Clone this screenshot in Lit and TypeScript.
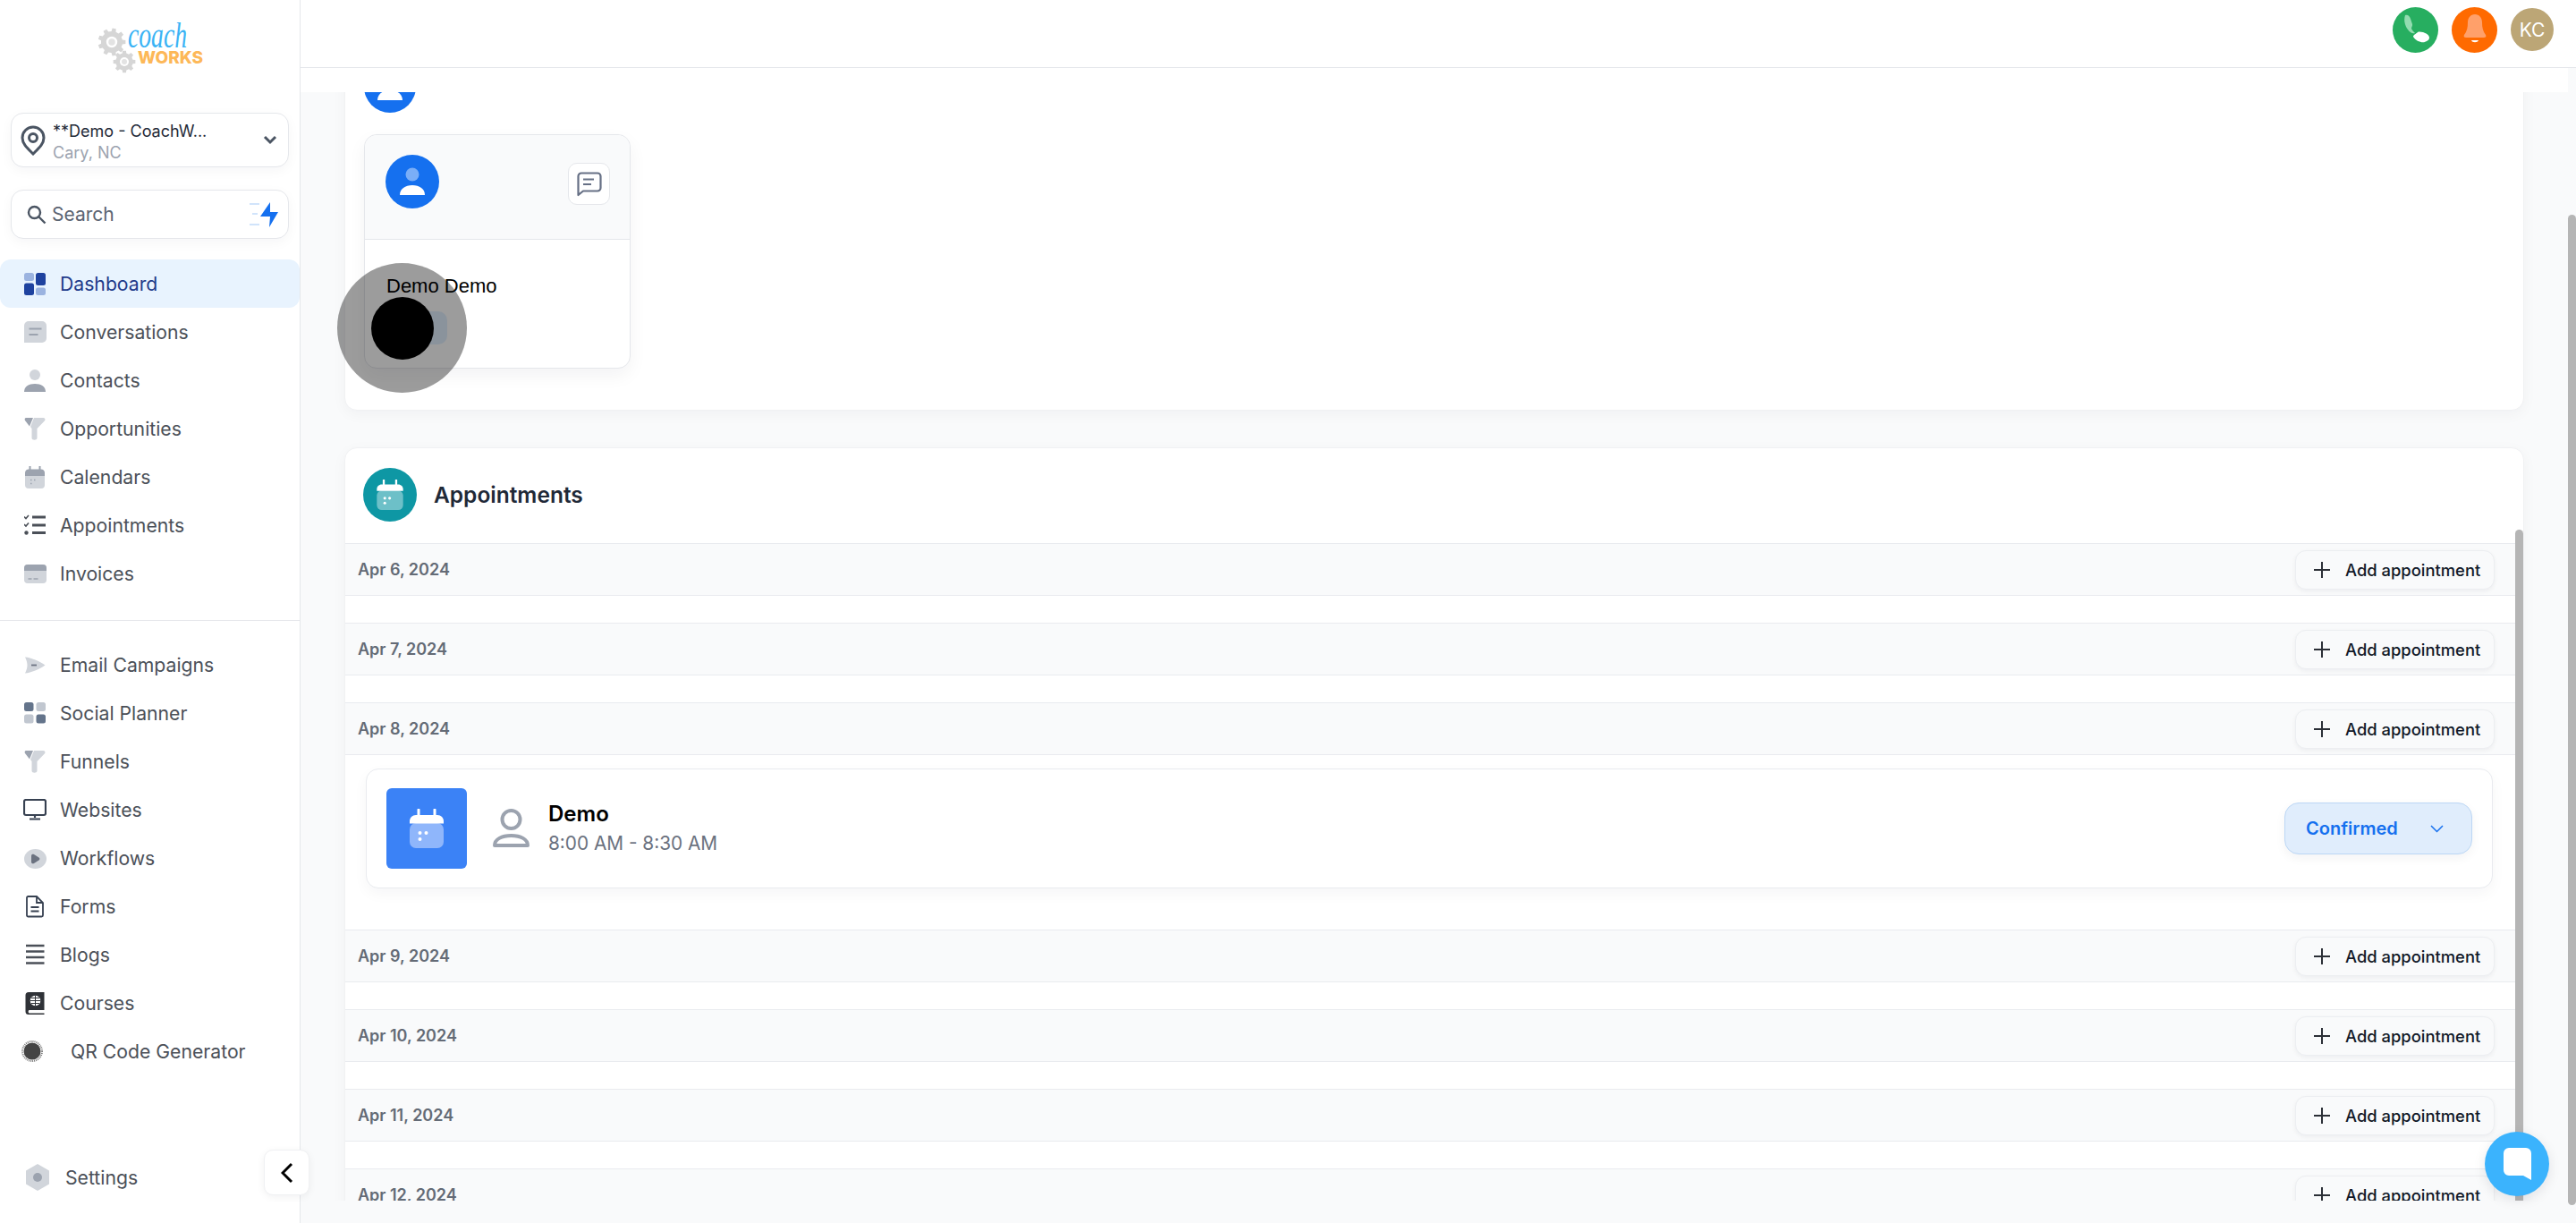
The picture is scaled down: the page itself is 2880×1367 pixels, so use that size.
import { LitElement, html, css, svg } from 'lit';
import { customElement } from 'lit/decorators.js';

interface NavItem {
  label: string;
  icon: unknown;
  active?: boolean;
}

const LIGHT = '#d1d5db';
const MID = '#9ca3af';
const DARK = '#374151';

const funnel = svg`
  <path d="M11 0h10.500c1.800 0 2.500 1.800 1.500 3.300L14.500 12v10.500c0 3-6 3-6 0V12L7 10z" fill="${LIGHT}"/>
  <path d="M2 0h8L6 9.500 1 3C.2 1.700.8 0 2 0z" fill="${MID}"/>`;

const icons: Record<string, unknown> = {
  dashboard: svg`
    <rect x="0" y="0" width="11" height="9" rx="2.500" fill="#9bb3e0"/>
    <rect x="13" y="0" width="11" height="14" rx="2.500" fill="#1e429f"/>
    <rect x="0" y="11.500" width="11" height="13.500" rx="2.500" fill="#1e429f"/>
    <rect x="13" y="16.500" width="11" height="8.500" rx="2.500" fill="#9bb3e0"/>`,
  conversations: svg`
    <path d="M5 0h15a5 5 0 0 1 5 5v14a5 5 0 0 1-5 5H0V5a5 5 0 0 1 5-5z" fill="${LIGHT}"/>
    <path d="M5.500 8.500h14M5.500 15h10" stroke="${MID}" stroke-width="2" fill="none"/>`,
  contacts: svg`
    <circle cx="12" cy="6" r="6" fill="${LIGHT}"/>
    <path d="M0 25c0-6 5-9 12-9s12 3 12 9z" fill="${MID}"/>`,
  funnel,
  calendars: svg`
    <rect x="1" y="5" width="22" height="20" rx="4" fill="${LIGHT}"/>
    <path d="M1 11V7.500C1 5 3 3.500 5 3.500h14c2 0 4 1.500 4 4V11z" fill="${MID}"/>
    <path d="M6.500 0v4M17.500 0v4" stroke="${MID}" stroke-width="2"/>
    <path d="M7 15.500h1.500M11 15.500h1.500M7 19.500h1.500" stroke="${MID}" stroke-width="1.600"/>`,
  appointments: svg`
    <path d="M0 2.500l2 2 3-3.500M0 11l2 2 3-3.500" stroke="#4b5058" stroke-width="1.600" fill="none"/>
    <circle cx="2.500" cy="20.500" r="2.200" fill="#4b5058"/>
    <path d="M9 3h15M9 12h15M9 20.500h15" stroke="#4b5058" stroke-width="3" fill="none"/>`,
  invoices: svg`
    <rect x="0" y="0" width="25" height="21" rx="4" fill="${LIGHT}"/>
    <path d="M0 7V4a4 4 0 0 1 4-4h17a4 4 0 0 1 4 4v3z" fill="${MID}"/>
    <path d="M4.500 16h4M10.500 16h5" stroke="${MID}" stroke-width="1.500"/>`,
  email: svg`
    <path d="M1 1.500C8 2 17 6 23.500 10.500 17 15 8 19 1 19.500c1.500-3 2.500-6 2.500-9S2.500 4.500 1 1.500z" fill="${LIGHT}"/>
    <path d="M8 10.500h6" stroke="#6b7280" stroke-width="1.800"/>`,
  social: svg`
    <rect x="0" y="0" width="10.500" height="10" rx="2.500" fill="#64748b"/>
    <rect x="13.500" y="0" width="10.500" height="10" rx="2.500" fill="#c1c7d0"/>
    <rect x="0" y="13.500" width="10.500" height="10" rx="2.500" fill="#c1c7d0"/>
    <rect x="13.500" y="13.500" width="10.500" height="10" rx="2.500" fill="#64748b"/>`,
  websites: svg`
    <rect x="1" y="1" width="24" height="17" rx="2" stroke="${DARK}" stroke-width="2.200" fill="none"/>
    <path d="M13 18v3M7 22.500h12" stroke="${DARK}" stroke-width="2.200" fill="none"/>`,
  workflows: svg`
    <ellipse cx="12.500" cy="12" rx="12.500" ry="11" fill="${LIGHT}"/>
    <path d="M8 8.500c0-1.500 1.500-2 3-1.500l5.500 3.500c1.200.8 1.200 2.200 0 3L11 17c-1.500.7-3 0-3-1.500z" fill="#6b7280"/>`,
  forms: svg`
    <path d="M4.500 1H14l7 7v14a1.500 1.500 0 0 1-1.500 1.500h-15A1.500 1.500 0 0 1 3 22V2.500A1.500 1.500 0 0 1 4.500 1z" stroke="${DARK}" stroke-width="1.800" fill="none"/>
    <path d="M14 1v7h7M7.500 13h9M7.500 17.500h9" stroke="${DARK}" stroke-width="1.800" fill="none"/>`,
  blogs: svg`
    <path d="M2 2h20.500M2 8.500h20.500M2 15h20.500M2 21.500h20.500" stroke="#4b5058" stroke-width="2.400"/>`,
  courses: svg`
    <path d="M5 0h17.500v20H5.500a2.200 2.200 0 0 0 0 3.500h17V25H5a3.500 3.500 0 0 1-3.500-3.500V3.500A3.500 3.500 0 0 1 5 0z" fill="#2f3237"/>
    <circle cx="12.500" cy="9.500" r="5.800" fill="#fff"/>
    <path d="M6.700 9.500h11.600M12.500 3.700v11.600M8 6.500h9M8 12.500h9" stroke="#2f3237" stroke-width="1"/>`,
  settings: svg`
    <path d="M14 0l13 7.500v15L14 30 1 22.500v-15z" fill="${LIGHT}"/>
    <circle cx="14" cy="15" r="5" fill="${MID}"/>`,
};

const navIcon = (name: string, w = 24, h = 25) => html`
  <svg class="nav-icon" width="${w}" height="${h}" viewBox="0 0 ${w} ${h}">${icons[name]}</svg>
`;

const topNav: NavItem[] = [
  { label: 'Dashboard', icon: navIcon('dashboard'), active: true },
  { label: 'Conversations', icon: navIcon('conversations', 25, 24) },
  { label: 'Contacts', icon: navIcon('contacts') },
  { label: 'Opportunities', icon: navIcon('funnel') },
  { label: 'Calendars', icon: navIcon('calendars') },
  { label: 'Appointments', icon: navIcon('appointments') },
  { label: 'Invoices', icon: navIcon('invoices', 25, 21) },
];

const bottomNav: NavItem[] = [
  { label: 'Email Campaigns', icon: navIcon('email', 24, 21) },
  { label: 'Social Planner', icon: navIcon('social', 24, 24) },
  { label: 'Funnels', icon: navIcon('funnel') },
  { label: 'Websites', icon: html`<svg class="nav-icon monitor" width="26" height="24" viewBox="0 0 26 24">${icons.websites}</svg>` },
  { label: 'Workflows', icon: navIcon('workflows', 25, 23) },
  { label: 'Forms', icon: navIcon('forms', 24, 25) },
  { label: 'Blogs', icon: navIcon('blogs', 24, 24) },
  { label: 'Courses', icon: navIcon('courses', 24, 25) },
];

const days = ['Apr 6, 2024', 'Apr 7, 2024', 'Apr 8, 2024', 'Apr 9, 2024', 'Apr 10, 2024', 'Apr 11, 2024', 'Apr 12, 2024'];

// outline of a cog with square teeth, used twice in the logo
const gearPath = (cx: number, cy: number, r: number, teeth = 8) => {
  const step = (Math.PI * 2) / teeth;
  const inner = r * 0.78;
  const pts: string[] = [];
  for (let i = 0; i < teeth; i++) {
    const a = i * step;
    const spread = step * 0.24;
    [
      [inner, a - spread * 1.25],
      [r, a - spread * 0.8],
      [r, a + spread * 0.8],
      [inner, a + spread * 1.25],
    ].forEach(([rad, ang]) => {
      pts.push(`${(cx + rad * Math.cos(ang)).toFixed(2)},${(cy + rad * Math.sin(ang)).toFixed(2)}`);
    });
  }
  return pts.join(' ');
};

const calendarGlyph = (w: number, top: string, body: string, dots: string) => html`
  <svg width="${w}" height="${w}" viewBox="0 0 38 44">
    <rect x="0" y="16" width="38" height="28" rx="7" fill="${body}"/>
    <path d="M0 16.500V14c0-4 3-7 7-7h24c4 0 7 3 7 7v2.500z" fill="${top}"/>
    <path d="M10 1v7M28 1v7" stroke="${top}" stroke-width="3" stroke-linecap="round"/>
    <circle cx="11.500" cy="27" r="2" fill="${dots}"/><circle cx="18.500" cy="27" r="2" fill="${dots}"/><circle cx="11.500" cy="34" r="2" fill="${dots}"/>
  </svg>
`;

@customElement('app-root')
export class AppRoot extends LitElement {
  static styles = css`
    :host {
      display: block;
      height: 100vh;
      overflow: hidden;
      position: relative;
      font-family: 'Inter', 'Liberation Sans', sans-serif;
      color: #111827;
      background: #f9fafb;
    }

    .shell {
      display: flex;
      height: 100%;
    }

    /* sidebar */
    .sidebar {
      width: 335px;
      flex: none;
      background: #fff;
      border-right: 1px solid #e5e7eb;
      display: flex;
      flex-direction: column;
      position: relative;
    }

    .logo {
      height: 126px;
      padding: 14px 0 0 108px;
      box-sizing: border-box;
    }

    .picker {
      margin: 0 12px;
      border: 1px solid #e5e7eb;
      border-radius: 14px;
      background: #fff;
      box-shadow: 0 4px 14px rgba(16, 24, 40, 0.04);
      display: flex;
      align-items: center;
    }

    .location {
      height: 61px;
      box-sizing: border-box;
      padding: 0 12px 0 10px;
      gap: 8px;
    }

    .location-text {
      flex: 1;
      min-width: 0;
      padding-top: 5px;
    }

    .location-name {
      font-size: 18px;
      line-height: 24px;
      color: #1f2937;
    }

    .location-sub {
      font-size: 18px;
      line-height: 24px;
      color: #9ca3af;
    }

    .search {
      height: 55px;
      box-sizing: border-box;
      margin-top: 25px;
      padding: 0 11px 0 17px;
      gap: 6px;
      font-size: 21px;
      color: #5b6472;
    }

    .search span {
      flex: 1;
    }

    .nav {
      display: flex;
      flex-direction: column;
    }

    .nav.first {
      margin-top: 23px;
    }

    .nav-item {
      height: 54px;
      display: grid;
      grid-template-columns: 24px 1fr;
      column-gap: 16px;
      align-items: center;
      padding-left: 27px;
      font-size: 21.200px;
      color: #4b5058;
      border-radius: 12px;
    }

    .nav-item.active {
      background: #e8f3fe;
      color: #1e3a8a;
    }

    .nav-icon {
      display: block;
    }

    .nav-icon.monitor {
      margin-left: -1px;
    }

    .divider {
      height: 1px;
      background: #e5e7eb;
      margin: 25px 0 22px;
    }

    .nav-item.qr {
      padding-left: 24px;
      column-gap: 31px;
    }

    .nav-item.settings {
      margin-top: auto;
      margin-bottom: 24px;
      padding-left: 28px;
      grid-template-columns: 28px 1fr;
      column-gap: 17px;
    }

    .collapse {
      position: absolute;
      left: 295px;
      top: 1285px;
      width: 51px;
      height: 51px;
      box-sizing: border-box;
      background: #fff;
      border: 1px solid #f0f1f3;
      border-radius: 10px;
      box-shadow: 0 2px 8px rgba(16, 24, 40, 0.06);
      display: flex;
      align-items: center;
      justify-content: center;
    }

    /* main column */
    .main {
      flex: 1;
      min-width: 0;
      display: flex;
      flex-direction: column;
    }

    .topbar {
      height: 75px;
      flex: none;
      background: #fff;
      border-bottom: 1px solid #e5e7eb;
      display: flex;
      align-items: center;
      justify-content: flex-end;
      padding-right: 25px;
      gap: 15px;
    }

    .top-btn {
      width: 51px;
      height: 51px;
      border-radius: 50%;
      display: flex;
      align-items: center;
      justify-content: center;
      margin-top: -9px;
    }

    .top-btn.call {
      background: #27ae60;
    }

    .top-btn.bell {
      background: #ff6a00;
    }

    .top-btn.user {
      width: 48px;
      height: 48px;
      background: #bca676;
      color: #fff;
      font-size: 21px;
    }

    .body {
      flex: 1;
      min-height: 0;
      display: flex;
    }

    .content {
      flex: 1;
      min-width: 0;
    }

    .strip {
      height: 27px;
      background: #fff;
    }

    .scroller {
      height: 1239px;
      overflow: hidden;
      padding: 0 49px;
    }

    .page-track {
      width: 9px;
      flex: none;
    }

    .page-thumb {
      width: 9px;
      height: 1107px;
      margin-top: 164px;
      background: #b5b5b5;
      border-radius: 5px;
    }

    .panel {
      background: #fff;
      border-radius: 14px;
      border: 1px solid #f0f1f3;
      box-sizing: border-box;
      box-shadow: 0 4px 16px rgba(16, 24, 40, 0.04);
    }

    .contact-panel {
      margin-top: -60px;
      padding: 24px 21px 46px;
    }

    .round {
      border-radius: 50%;
      display: flex;
      align-items: center;
      justify-content: center;
      flex: none;
    }

    .avatar-sm {
      width: 58px;
      height: 58px;
      background: #1570ef;
      margin-bottom: 24px;
    }

    .contact-card {
      width: 298px;
      height: 262px;
      box-sizing: border-box;
      border: 1px solid #e5e7eb;
      border-radius: 14px;
      box-shadow: 0 8px 20px rgba(16, 24, 40, 0.05);
      position: relative;
      background: #fff;
    }

    .contact-head {
      height: 117px;
      background: #f9fafb;
      border-bottom: 1px solid #e5e7eb;
      border-radius: 14px 14px 0 0;
      padding: 22px 22px 0 23px;
      display: flex;
      justify-content: space-between;
      box-sizing: border-box;
    }

    .avatar {
      width: 60px;
      height: 60px;
      background: #1570ef;
    }

    .msg-btn {
      width: 47px;
      height: 47px;
      margin-top: 9px;
      box-sizing: border-box;
      border: 1px solid #e5e7eb;
      border-radius: 10px;
      background: #fff;
      display: flex;
      align-items: center;
      justify-content: center;
    }

    .contact-name {
      font-family: 'Liberation Sans', Arial, sans-serif;
      font-size: 22px;
      line-height: 26px;
      color: #000;
      padding: 39px 0 0 24px;
    }

    .contact-chip {
      width: 70px;
      height: 37px;
      margin: 15px 0 0 22px;
      border-radius: 10px;
      background: #e2f1ff;
    }

    .touch {
      position: absolute;
      left: -31px;
      top: 143px;
      width: 145px;
      height: 145px;
      border-radius: 50%;
      background: rgba(0, 0, 0, 0.39);
      display: flex;
      align-items: center;
      justify-content: center;
    }

    .touch i {
      display: block;
      width: 70px;
      height: 70px;
      border-radius: 50%;
      background: #000;
    }

    .appointments {
      margin-top: 41px;
    }

    .appt-head {
      height: 91px;
      display: flex;
      align-items: center;
      padding: 0 0 0 20px;
      gap: 19px;
      box-sizing: border-box;
    }

    .appt-icon {
      width: 60px;
      height: 60px;
      background: #0e97a4;
      margin-top: 12px;
    }

    .appt-title {
      font-size: 24.500px;
      font-weight: 600;
      color: #1f2937;
      margin-top: 12px;
    }

    .appt-scroll {
      display: flex;
    }

    .appt-list {
      flex: 1;
      min-width: 0;
      padding-top: 15px;
    }

    .appt-thumb {
      width: 9px;
      height: 900px;
      flex: none;
      background: #b5b5b5;
      border-radius: 5px 5px 0 0;
    }

    .day-row {
      height: 59px;
      box-sizing: border-box;
      background: #f9fafb;
      border-top: 1px solid #e9ebef;
      border-bottom: 1px solid #e9ebef;
      display: flex;
      align-items: center;
      justify-content: space-between;
      padding: 0 23px 0 14px;
    }

    .day-date {
      font-size: 18px;
      font-weight: 600;
      color: #646b76;
    }

    .add-btn {
      width: 223px;
      height: 44px;
      box-sizing: border-box;
      background: #f9fafb;
      border: 1px solid #eceef1;
      border-radius: 12px;
      box-shadow: 0 2px 5px rgba(16, 24, 40, 0.05);
      display: flex;
      align-items: center;
      padding-left: 20px;
      gap: 17px;
      font-size: 18.400px;
      font-weight: 500;
      color: #111827;
    }

    .day-body {
      height: 30px;
    }

    .day-body.filled {
      height: auto;
      padding: 15px 25px 46px 23px;
    }

    .event {
      height: 134px;
      box-sizing: border-box;
      border: 1px solid #e9ebef;
      border-radius: 14px;
      background: #fff;
      box-shadow: 0 6px 16px rgba(16, 24, 40, 0.04);
      display: flex;
      align-items: center;
      padding: 0 22px;
    }

    .event-cal {
      width: 90px;
      height: 90px;
      flex: none;
      border-radius: 6px;
      background: #3b82f6;
      display: flex;
      align-items: center;
      justify-content: center;
    }

    .event-person {
      margin: 0 21px 0 29px;
      flex: none;
    }

    .event-info {
      flex: 1;
    }

    .event-name {
      font-size: 24px;
      font-weight: 600;
      line-height: 32px;
      color: #000;
    }

    .event-time {
      font-size: 20.800px;
      line-height: 33px;
      color: #6b7280;
    }

    .status {
      width: 210px;
      height: 58px;
      box-sizing: border-box;
      background: #e0edfc;
      border: 1px solid #bcd7f5;
      border-radius: 16px;
      box-shadow: 0 4px 12px rgba(16, 24, 40, 0.05);
      display: flex;
      align-items: center;
      justify-content: space-between;
      padding: 0 31px 0 23px;
      font-size: 20px;
      font-weight: 600;
      color: #1570ef;
    }

    .chat {
      position: absolute;
      left: 2778px;
      top: 1265px;
      width: 72px;
      height: 72px;
      border-radius: 50%;
      background: #3bb3fd;
      box-shadow: 0 4px 14px rgba(16, 24, 40, 0.1);
      display: flex;
      align-items: center;
      justify-content: center;
    }

    .logo-mark {
      display: block;
      overflow: visible;
    }

    .logo-coach {
      font-family: 'Liberation Serif', serif;
      font-style: italic;
      font-size: 40px;
      fill: #3ab3f5;
    }

    .logo-works {
      font-family: 'Inter', sans-serif;
      font-weight: 800;
      font-size: 19px;
      fill: #fdb858;
    }
  `;

  private renderNavItem(item: NavItem) {
    return html`
      <div class="nav-item ${item.active ? 'active' : ''}">
        ${item.icon}
        <span>${item.label}</span>
      </div>
    `;
  }

  private renderLogo() {
    const gear = (cx: number, cy: number, r: number, teeth: number) => svg`
      <polygon points="${gearPath(cx, cy, r, teeth)}" fill="#d6d6d6"/>
      <circle cx="${cx}" cy="${cy}" r="${r * 0.4}" fill="#fff"/>
      <circle cx="${cx}" cy="${cy}" r="${r * 0.24}" fill="#e3e3e3"/>`;
    return html`
      <svg class="logo-mark" width="124" height="72" viewBox="0 0 124 72">
        ${gear(17, 33, 15.500, 9)} ${gear(31, 55, 12.500, 8)}
        <text class="logo-coach" x="35" y="39" textLength="66" lengthAdjust="spacingAndGlyphs">coach</text>
        <text class="logo-works" x="46" y="57">WORKS</text>
      </svg>
    `;
  }

  private renderSidebar() {
    return html`
      <aside class="sidebar">
        <div class="logo">${this.renderLogo()}</div>
        <div class="picker location">
          <svg width="28" height="34" viewBox="0 0 28 34" fill="none">
            <path d="M14 32C8 26 2 21 2 14a12 12 0 0 1 24 0c0 7-6 12-12 18z" stroke="#4b5563" stroke-width="3"/>
            <circle cx="14" cy="14" r="4.500" stroke="#4b5563" stroke-width="3"/>
          </svg>
          <div class="location-text">
            <div class="location-name">**Demo - CoachW...</div>
            <div class="location-sub">Cary, NC</div>
          </div>
          <svg width="16" height="11" viewBox="0 0 16 11" fill="none">
            <path d="M2 2l6 6 6-6" stroke="#4b5563" stroke-width="3"/>
          </svg>
        </div>
        <div class="picker search">
          <svg width="22" height="22" viewBox="0 0 22 22" fill="none">
            <circle cx="8.500" cy="8.500" r="6.500" stroke="#4b5563" stroke-width="2.400"/>
            <path d="M13.500 13.500l7 7" stroke="#4b5563" stroke-width="2.400"/>
          </svg>
          <span>Search</span>
          <svg width="32" height="28" viewBox="0 0 32 28" fill="none">
            <path d="M0 2h11M3 13h6M0 25h11" stroke="#d1e4fb" stroke-width="1.800"/>
            <path d="M23 0v11h9L22 28l1-12h-11z" fill="#1570ef"/>
          </svg>
        </div>
        <nav class="nav first">${topNav.map((item) => this.renderNavItem(item))}</nav>
        <div class="divider"></div>
        <nav class="nav">
          ${bottomNav.map((item) => this.renderNavItem(item))}
          <div class="nav-item qr">
            <svg width="24" height="24" viewBox="0 0 24 24">
              <circle cx="12" cy="12" r="9.500" fill="#444"/>
              <circle cx="12" cy="12" r="11" fill="none" stroke="#777" stroke-width="2" stroke-dasharray="1 1"/>
            </svg>
            <span>QR Code Generator</span>
          </div>
        </nav>
        <div class="nav-item settings">${navIcon('settings', 28, 30)}<span>Settings</span></div>
        <div class="collapse">
          <svg width="14" height="24" viewBox="0 0 14 24" fill="none">
            <path d="M12 2L2 12l10 10" stroke="#000" stroke-width="3"/>
          </svg>
        </div>
      </aside>
    `;
  }

  private renderTopbar() {
    return html`
      <header class="topbar">
        <div class="top-btn call">
          <svg width="32" height="34" viewBox="0 0 32 34">
            <path d="M4 1c3-1 5 1 6 4l2 6c.5 2-1 3-1 5 1 2 3 4 4 5-3 1-6-1-8-4C4 13 2 7 4 1z" fill="#93dcb0"/>
            <path d="M13 25c0-2 3-3 5-5 2-1 4 0 6 0 3 1 7 3 7 6s-3 4-5 5c-4 1-10-1-13-6z" fill="#fff"/>
          </svg>
        </div>
        <div class="top-btn bell">
          <svg width="26" height="36" viewBox="0 0 26 36">
            <path d="M13 1c5 0 8 4 8 9 0 6 1 10 4 14 1 2 0 3-2 3H3c-2 0-3-1-2-3 3-4 4-8 4-14 0-5 3-9 8-9z" fill="#ffa06a"/>
            <path d="M9 30h8c-1 3-7 3-8 0z" fill="#fff"/>
          </svg>
        </div>
        <div class="top-btn user">KC</div>
      </header>
    `;
  }

  private renderContactPanel() {
    return html`
      <section class="panel contact-panel">
        <div class="round avatar-sm">${this.personGlyph(28)}</div>
        <div class="contact-card">
          <div class="contact-head">
            <div class="round avatar">${this.personGlyph(28)}</div>
            <div class="msg-btn">
              <svg width="28" height="28" viewBox="0 0 28 28" fill="none">
                <path d="M1.500 26V5a3.500 3.500 0 0 1 3.500-3.500h18a3.500 3.500 0 0 1 3.500 3.500v13a3.500 3.500 0 0 1-3.500 3.500H7z" stroke="#667085" stroke-width="2.200" stroke-linejoin="round"/>
                <path d="M7 8.500h12M7 14h9" stroke="#667085" stroke-width="2.200"/>
              </svg>
            </div>
          </div>
          <div class="contact-name">Demo Demo</div>
          <div class="contact-chip"></div>
          <div class="touch"><i></i></div>
        </div>
      </section>
    `;
  }

  private personGlyph(size: number) {
    return html`
      <svg width="${size}" height="${size + 4}" viewBox="0 0 28 32">
        <circle cx="14" cy="8" r="7.500" fill="#7aaef7"/>
        <path d="M0 31c0-7 6-11 14-11s14 4 14 11z" fill="#fff"/>
      </svg>
    `;
  }

  private renderAppointments() {
    return html`
      <section class="panel appointments">
        <div class="appt-head">
          <div class="round appt-icon">${calendarGlyph(34, '#fff', '#6dc0c8', '#fff')}</div>
          <div class="appt-title">Appointments</div>
        </div>
        <div class="appt-scroll">
          <div class="appt-list">${days.map((day, i) => this.renderDay(day, i === 2))}</div>
          <div class="appt-thumb"></div>
        </div>
      </section>
    `;
  }

  private renderDay(day: string, hasEvent: boolean) {
    return html`
      <div class="day-row">
        <span class="day-date">${day}</span>
        <div class="add-btn">
          <svg width="18" height="18" viewBox="0 0 18 18" fill="none">
            <path d="M9 0v18M0 9h18" stroke="#2b2f36" stroke-width="2"/>
          </svg>
          <span>Add appointment</span>
        </div>
      </div>
      ${hasEvent
        ? html`<div class="day-body filled">
            <div class="event">
              <div class="event-cal">${calendarGlyph(44, '#fff', '#8fb6fb', '#fff')}</div>
              <svg class="event-person" width="41" height="44" viewBox="0 0 41 44" fill="none">
                <circle cx="20.500" cy="12" r="10" stroke="#9ca3af" stroke-width="4"/>
                <path d="M2 41c0-7 8-11 18.500-11S39 34 39 41z" stroke="#9ca3af" stroke-width="4" stroke-linejoin="round"/>
              </svg>
              <div class="event-info">
                <div class="event-name">Demo</div>
                <div class="event-time">8:00 AM - 8:30 AM</div>
              </div>
              <div class="status">
                <span>Confirmed</span>
                <svg width="15" height="9" viewBox="0 0 15 9" fill="none">
                  <path d="M1 1l6.500 6.500L14 1" stroke="#1570ef" stroke-width="1.500"/>
                </svg>
              </div>
            </div>
          </div>`
        : html`<div class="day-body"></div>`}
    `;
  }

  render() {
    return html`
      <div class="shell">
        ${this.renderSidebar()}
        <div class="main">
          ${this.renderTopbar()}
          <div class="body">
            <div class="content">
              <div class="strip"></div>
              <div class="scroller">${this.renderContactPanel()} ${this.renderAppointments()}</div>
            </div>
            <div class="page-track"><div class="page-thumb"></div></div>
          </div>
        </div>
      </div>
      <div class="chat">
        <svg width="31" height="36" viewBox="0 0 31 36">
          <path d="M6 0h19a6 6 0 0 1 6 6v30l-9-5H6a6 6 0 0 1-6-6V6a6 6 0 0 1 6-6z" fill="#fff"/>
        </svg>
      </div>
    `;
  }
}

declare global {
  interface HTMLElementTagNameMap {
    'app-root': AppRoot;
  }
}
